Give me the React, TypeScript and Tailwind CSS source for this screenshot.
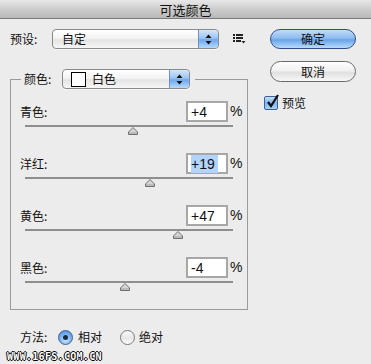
import React from 'react';

const rows = [
  { label: '青色:', value: '+4', pos: 4, selected: false },
  { label: '洋红:', value: '+19', pos: 20, selected: true },
  { label: '黄色:', value: '+47', pos: 47, selected: false },
  { label: '黑色:', value: '-4', pos: -4, selected: false },
];

const cjk = "font-['Noto_Sans_CJK_SC','Noto_Sans',sans-serif]";

function Arrows() {
  return (
    <div className="flex h-full w-[20px] items-center justify-center rounded-r-[4px] border-l border-[#6f8fbf] bg-[linear-gradient(#d3e6fb,#9cc5f3_45%,#6ea8ec_55%,#b7dafd)]">
      <svg width="7" height="11" viewBox="0 0 7 11">
        <path d="M3.5 0.5 L6.5 4 L0.5 4 Z" fill="#111" />
        <path d="M3.5 10.5 L6.5 7 L0.5 7 Z" fill="#111" />
      </svg>
    </div>
  );
}

function Popup({ width, children }: { width: string; children: React.ReactNode }) {
  return (
    <div
      className={`flex h-[20px] ${width} items-stretch rounded-[4px] border border-[#8a8a8a] bg-[linear-gradient(#ffffff,#f4f4f4_45%,#e4e4e4_55%,#f6f6f6)] shadow-[0_1px_0_rgba(255,255,255,0.6)]`}
    >
      <div className="flex flex-1 items-center">{children}</div>
      <Arrows />
    </div>
  );
}

function Radio({ on }: { on: boolean }) {
  if (on) {
    return (
      <div className="flex h-[15px] w-[15px] items-center justify-center rounded-full border border-[#3d5f94] bg-[radial-gradient(circle_at_50%_70%,#c9e6ff,#6fa9ea_60%,#4a86d4)]">
        <div className="h-[5px] w-[5px] rounded-full bg-[#1b2a40]" />
      </div>
    );
  }
  return (
    <div className="h-[15px] w-[15px] rounded-full border border-[#7a7a7a] bg-[linear-gradient(#fafafa,#e6e6e6_55%,#ffffff)]" />
  );
}

export default function App() {
  return (
    <div className={`relative h-[364px] w-[371px] overflow-hidden bg-[#ececec] text-[12px] text-[#111] ${cjk}`}>
      {/* title bar */}
      <div className="flex h-[19px] items-center justify-center border-b border-[#7c7c7c] bg-[linear-gradient(#e8e8e8,#cdcdcd_50%,#b8b8b8)] text-[13px] leading-none">
        可选颜色
      </div>

      <div className="flex">
        {/* left column */}
        <div className="w-[252px]">
          <div className="mt-[10px] flex h-[20px] items-center pl-[10px]">
            <span className="w-[42px]">预设:</span>
            <Popup width="w-[167px]">
              <span className="pl-[9px]">自定</span>
            </Popup>
            <svg className="ml-[14px]" width="13" height="10" viewBox="0 0 13 10">
              <rect x="0" y="0" width="2" height="2" fill="#222" />
              <rect x="3" y="0" width="7" height="2" fill="#222" />
              <rect x="0" y="3" width="2" height="2" fill="#222" />
              <rect x="3" y="3" width="7" height="2" fill="#222" />
              <rect x="0" y="6" width="2" height="2" fill="#222" />
              <rect x="3" y="6" width="5" height="2" fill="#222" />
              <path d="M8.5 7 L12.5 7 L10.5 9.5 Z" fill="#222" />
            </svg>
          </div>

          <fieldset className="ml-[10px] mt-[20px] w-[238px] border border-[#9a9a9a]">
            <legend className="ml-[10px] px-[3px]">
              <div className="flex h-[20px] items-center pr-[2px]">
                <span className="w-[38px]">颜色:</span>
                <Popup width="w-[128px]">
                  <div className="ml-[8px] h-[15px] w-[15px] border border-black bg-white" />
                  <span className="ml-[6px]">白色</span>
                </Popup>
              </div>
            </legend>

            <div className="mt-[12px]">
              {rows.map((r) => (
                <div key={r.label} className="h-[52px]">
                  <div className="flex h-[21px] items-center pl-[9px]">
                    <span className="w-[166px]">{r.label}</span>
                    <div className="flex h-[21px] w-[42px] items-center border-2 border-[#a7a7a7] bg-white pl-[3px] font-['Liberation_Sans',sans-serif] text-[14px] leading-none">
                      {r.selected ? (
                        <span className="bg-[#b2d3fb] py-[2px] pr-[3px]">{r.value}</span>
                      ) : (
                        <span>{r.value}</span>
                      )}
                    </div>
                    <span className="ml-[2px] font-['Liberation_Sans',sans-serif] text-[14px]">%</span>
                  </div>
                  <div className="relative ml-[14px] mt-[3px] h-[11px] w-[208px]">
                    <div className="h-[2px] w-full bg-[#8e8e8e]" />
                    <svg
                      className="absolute top-[2px]"
                      style={{ left: 104 + r.pos * 1.04 - 5 }}
                      width="10"
                      height="8"
                      viewBox="0 0 10 8"
                    >
                      <path d="M5 0.5 L9.5 5 L9.5 7.5 L0.5 7.5 L0.5 5 Z" fill="#d6d6d6" stroke="#6e6e6e" />
                      <path d="M1 6 L9 6" stroke="#a0a0a0" />
                    </svg>
                  </div>
                </div>
              ))}
            </div>
          </fieldset>

          <div className="mt-[19px] flex h-[16px] items-center pl-[20px]">
            <span className="w-[38px]">方法:</span>
            <Radio on />
            <span className="ml-[5px] w-[42px]">相对</span>
            <Radio on={false} />
            <span className="ml-[4px]">绝对</span>
          </div>
        </div>

        {/* right column */}
        <div className="ml-[18px] mt-[10px] flex flex-col">
          <button className="flex h-[20px] w-[86px] items-center justify-center rounded-full border border-[#2f4f86] bg-[linear-gradient(#c2dcf6,#8fbcef_45%,#6aa4e8_55%,#b9dcfc)] text-[12px] leading-none">
            确定
          </button>
          <button className="mt-[12px] flex h-[21px] w-[86px] items-center justify-center rounded-full border border-[#6a6a6a] bg-[linear-gradient(#ffffff,#f1f1f1_45%,#e0e0e0_55%,#f7f7f7)] text-[12px] leading-none">
            取消
          </button>
          <div className="mt-[12px] ml-[-6px] flex items-center">
            <div className="relative h-[14px] w-[14px] rounded-[2px] border border-[#3d5f94] bg-[linear-gradient(#c6e0fa,#7db2ee_50%,#a9d2fb)]">
              <svg className="absolute left-[1px] top-[-3px]" width="14" height="15" viewBox="0 0 14 15">
                <path d="M2 8 L5 12 L12 1" fill="none" stroke="#111" strokeWidth="2.2" />
              </svg>
            </div>
            <span className="ml-[4px]">预览</span>
          </div>
        </div>
      </div>

      {/* watermark */}
      <div className="absolute bottom-[2px] left-[7px] font-['DejaVu_Sans_Mono',monospace] text-[10px] font-bold leading-none tracking-[0.3px] text-white [text-shadow:1px_0_0_#000,-1px_0_0_#000,0_1px_0_#000,0_-1px_0_#000]">
        WWW.16FS.COM.CN
      </div>
    </div>
  );
}
